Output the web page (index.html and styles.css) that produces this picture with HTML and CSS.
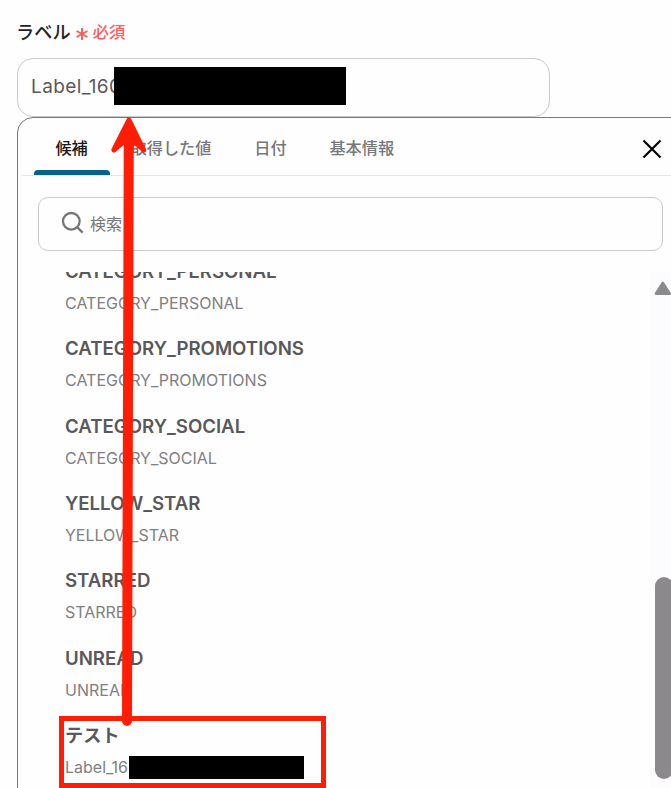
FILE: index.html
```html
<!DOCTYPE html>
<html lang="ja">
<head>
  <meta charset="UTF-8">
  <meta name="viewport" content="width=device-width, initial-scale=1.0">
  <title>ラベル</title>
  <link rel="stylesheet" href="styles.css">
</head>
<body>
  <div class="field-label">
    <span class="field-name">ラベル</span>
    <svg class="required-mark" width="14" height="14" viewBox="0 0 14 14">
      <path d="M7 1v12M1.6 4l10.8 6M12.4 4L1.6 10"/>
    </svg>
    <span class="required-text">必須</span>
  </div>

  <div class="field-input">
    <span class="field-value">Label_160</span>
    <span class="mask mask-input"></span>
  </div>

  <div class="panel">
    <div class="tabs">
      <div class="tab active">候補</div>
      <div class="tab">取得した値</div>
      <div class="tab">日付</div>
      <div class="tab">基本情報</div>
      <svg class="close" width="20" height="20" viewBox="0 0 20 20">
        <path d="M1.5 1.5l17 17M18.5 1.5l-17 17"/>
      </svg>
    </div>

    <div class="search">
      <svg class="search-icon" width="24" height="24" viewBox="0 0 24 24">
        <circle cx="10.3" cy="10.3" r="8.3"/>
        <path d="M16.4 16.4l5.2 5.2"/>
      </svg>
      <span>検索</span>
    </div>

    <div class="list">
      <div class="items">
        <div class="item">
          <div class="item-title">CATEGORY_PERSONAL</div>
          <div class="item-id">CATEGORY_PERSONAL</div>
        </div>
        <div class="item">
          <div class="item-title">CATEGORY_PROMOTIONS</div>
          <div class="item-id">CATEGORY_PROMOTIONS</div>
        </div>
        <div class="item">
          <div class="item-title">CATEGORY_SOCIAL</div>
          <div class="item-id">CATEGORY_SOCIAL</div>
        </div>
        <div class="item">
          <div class="item-title">YELLOW_STAR</div>
          <div class="item-id">YELLOW_STAR</div>
        </div>
        <div class="item">
          <div class="item-title">STARRED</div>
          <div class="item-id">STARRED</div>
        </div>
        <div class="item">
          <div class="item-title">UNREAD</div>
          <div class="item-id">UNREAD</div>
        </div>
        <div class="item">
          <div class="item-title item-title-ja">テスト</div>
          <div class="item-id">Label_16<span class="mask mask-item"></span></div>
        </div>
      </div>

      <div class="scrollbar">
        <svg class="scroll-up" width="17" height="15" viewBox="0 0 17 15">
          <path d="M8.8 2.2L15.5 12.5H2.2Z"/>
        </svg>
        <div class="scroll-thumb"></div>
      </div>
    </div>
  </div>

  <!-- Annotations -->
  <div class="highlight-box"></div>
  <svg class="arrow" width="671" height="788" viewBox="0 0 671 788">
    <path class="arrow-line" d="M128.800 130L127 721"/>
    <path class="arrow-head" d="M113.800 150L129 120L143.700 150L129 137Z"/>
  </svg>
</body>
</html>
```

FILE: styles.css
```css
* {
  box-sizing: border-box;
}

body {
  position: relative;
  width: 671px;
  height: 788px;
  margin: 0;
  padding: 19px 0 0 17px;
  overflow: hidden;
  background: #fefefe;
  font-family: Inter, "Noto Sans CJK JP", sans-serif;
  color: #59585b;
}

.field-label {
  display: flex;
  align-items: center;
  height: 24px;
  margin-bottom: 15px;
  margin-left: -1px;
}

.field-name {
  font-size: 18.2px;
  font-weight: 500;
  color: #242428;
}

.required-mark {
  margin: 6px 4px 0 4px;
  fill: none;
  stroke: #ff5c5c;
  stroke-width: 2;
}

.required-text {
  font-size: 16.4px;
  font-weight: 500;
  color: #ff5c5c;
}

.field-input {
  position: relative;
  display: flex;
  align-items: center;
  width: 533px;
  height: 59px;
  padding: 0 13px 2px;
  border: 1px solid #cac9cc;
  border-radius: 16px;
}

.field-value {
  font-size: 19px;
  letter-spacing: 0.4px;
}

/* Blacked out part of a value */
.mask {
  position: absolute;
  background: #000;
}

.mask-input {
  left: 96px;
  top: 8px;
  width: 232px;
  height: 38px;
}

.panel {
  display: flex;
  flex-direction: column;
  width: 680px;
  height: 690px;
  border: 1px solid #777679;
  border-radius: 16px;
}

.tabs {
  display: flex;
  height: 58px;
  margin-left: 4px;
  padding-left: 12px;
  border-bottom: 1px solid #e5e4e6;
}

.tab {
  padding: 0 21.4px;
  border-bottom: 5px solid transparent;
  font-size: 16.2px;
  font-weight: 500;
  line-height: 60px;
  height: 57px;
  color: #777679;
}

.tab.active {
  position: relative;
  color: #19181b;
}

.tab.active::after {
  content: "";
  position: absolute;
  left: 0;
  right: -1px;
  bottom: -5px;
  height: 5px;
  border-radius: 4px 4px 0 0;
  background: #056384;
}

.close {
  margin: 21px 34px 0 auto;
  fill: none;
  stroke: #000;
  stroke-width: 2.2;
}

.search {
  display: flex;
  align-items: center;
  flex-shrink: 0;
  width: 625px;
  height: 54px;
  margin: 21px 0 0 20px;
  padding-left: 22px;
  border: 1px solid #cac9cc;
  border-radius: 10px;
  font-size: 16px;
  color: #777679;
}

.search-icon {
  margin: -2px 5px 0 0;
  fill: none;
  stroke: #777679;
  stroke-width: 2.3;
}

.search span {
  margin-top: -2px;
}

.list {
  display: flex;
  flex: 1;
  margin-top: 21px;
  overflow: hidden;
}

.items {
  width: 631px;
  margin-top: -15px;
  padding-left: 47px;
}

.item {
  height: 77.35px;
}

.item-title {
  height: 28px;
  margin-bottom: 6px;
  font-size: 18.65px;
  font-weight: 600;
  line-height: 28px;
}

.item-title-ja {
  font-size: 18.2px;
}

.item-id {
  position: relative;
  height: 24px;
  font-size: 16px;
  line-height: 24px;
  color: #807f82;
}

.mask-item {
  left: 64px;
  top: 1px;
  width: 175px;
  height: 23px;
}

.scrollbar {
  width: 40px;
  padding: 9px 0 0 5px;
  background: #fcfbfd;
}

.scroll-up {
  display: block;
  fill: #8b898c;
  stroke: #8b898c;
  stroke-width: 3;
  stroke-linejoin: round;
}

.scroll-thumb {
  width: 18px;
  height: 202px;
  margin: 281px 0 0 1px;
  border-radius: 9px;
  background: #8b898c;
}

.highlight-box {
  position: absolute;
  left: 59px;
  top: 716px;
  width: 267px;
  height: 72px;
  border: 5px solid #ff1e05;
}

.arrow {
  position: absolute;
  left: 0;
  top: 0;
  fill: none;
  stroke: #ff1e05;
  stroke-linecap: round;
  stroke-linejoin: round;
}

.arrow-line {
  stroke-width: 10;
}

.arrow-head {
  fill: #ff1e05;
  stroke-width: 5;
}
```
